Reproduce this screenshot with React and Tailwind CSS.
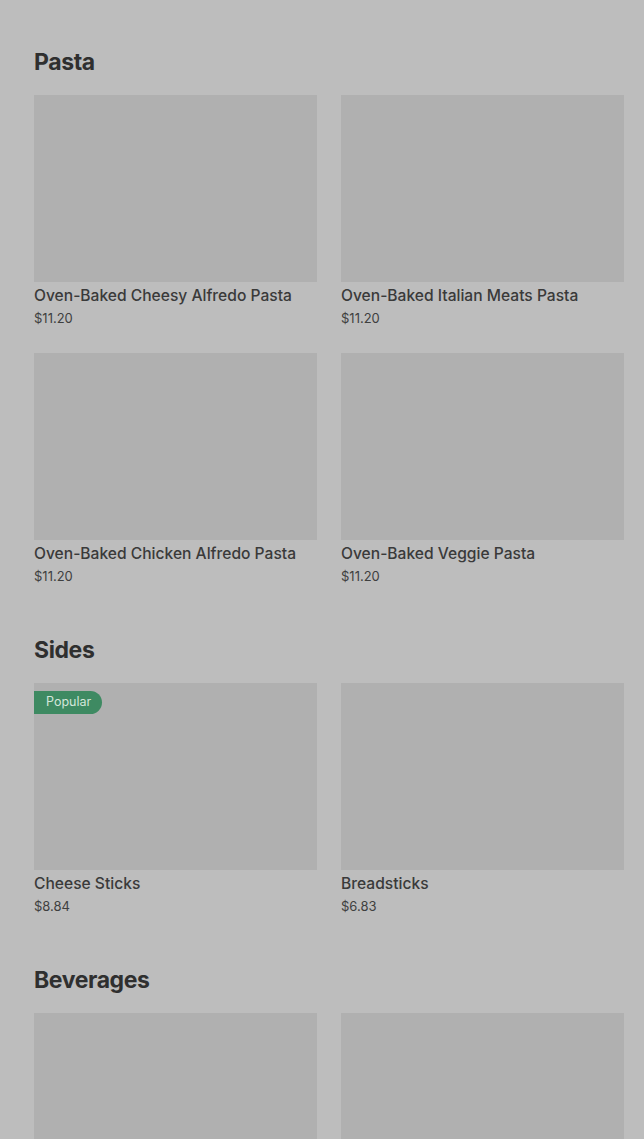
import React from 'react';

const sections = [
  {
    title: 'Pasta',
    items: [
      { name: 'Oven-Baked Cheesy Alfredo Pasta', price: '$11.20' },
      { name: 'Oven-Baked Italian Meats Pasta', price: '$11.20' },
      { name: 'Oven-Baked Chicken Alfredo Pasta', price: '$11.20' },
      { name: 'Oven-Baked Veggie Pasta', price: '$11.20' },
    ],
  },
  {
    title: 'Sides',
    items: [
      { name: 'Cheese Sticks', price: '$8.84', popular: true },
      { name: 'Breadsticks', price: '$6.83' },
    ],
  },
  {
    title: 'Beverages',
    items: [
      { name: 'Coca-Cola', price: '$3.49' },
      { name: 'Sprite', price: '$3.49' },
    ],
  },
];

function MenuItem({ item }) {
  return (
    <div className="flex flex-col">
      <div className="relative h-[187px] bg-[#b0b0b0]">
        {item.popular && (
          <span className="absolute left-0 top-2 h-[23px] pl-3 pr-[11px] flex items-center bg-[#3e8a62] text-[#d3e6da] text-[12.5px] rounded-r-full">
            Popular
          </span>
        )}
      </div>
      <p className="mt-[3px] text-[15.6px] leading-[22px] font-medium text-[#3a3a3a]">{item.name}</p>
      <p className="mt-[2px] text-[13px] leading-[18px] text-[#3f3f3f]">{item.price}</p>
    </div>
  );
}

export default function App() {
  return (
    <div
      className="min-h-screen bg-[#bdbdbd] pl-[34px] pr-[20px] overflow-hidden"
      style={{ fontFamily: 'Inter, "Noto Sans", sans-serif' }}
    >
      <div className="grid grid-cols-[283px_283px] gap-x-6 -mt-[20px]">
        <p className="text-[13px] leading-[18px] text-[#3f3f3f]">$11.20</p>
        <p className="text-[13px] leading-[18px] text-[#3f3f3f]">$11.20</p>
      </div>
      {sections.map((s, i) => (
        <section key={s.title} className={i === 0 ? 'mt-[48px]' : 'mt-[49px]'}>
          <h2 className="text-[23px] leading-[32px] font-bold tracking-[-0.4px] text-[#2f2f2f] mb-[17px]">
            {s.title}
          </h2>
          <div className="grid grid-cols-[283px_283px] gap-x-6 gap-y-[26px]">
            {s.items.map((item) => (
              <MenuItem key={item.name} item={item} />
            ))}
          </div>
        </section>
      ))}
    </div>
  );
}
